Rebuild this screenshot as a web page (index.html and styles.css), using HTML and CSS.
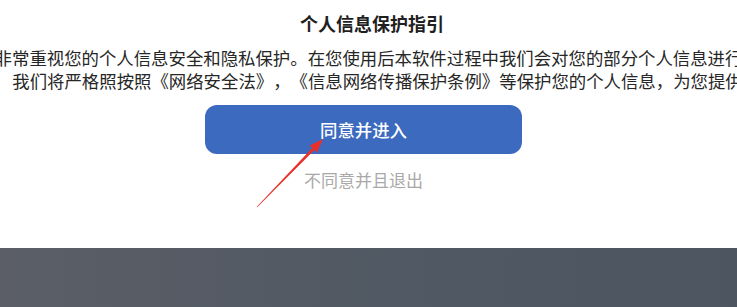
FILE: index.html
```html
<!DOCTYPE html>
<html lang="zh-CN">

<head>
    <meta charset="UTF-8">
    <meta name="viewport" content="width=device-width, initial-scale=1.0">
    <title>个人信息保护指引</title>
    <link rel="stylesheet" href="styles.css">
</head>

<body>
    <div class="dialog">
        <h1 class="title">个人信息保护指引</h1>
        <div class="content">
            <p class="line">非常重视您的个人信息安全和隐私保护。在您使用后本软件过程中我们会对您的部分个人信息进行</p>
            <p class="line line-indent">我们将严格照按照《网络安全法》，《信息网络传播保护条例》等保护您的个人信息，为您提供</p>
        </div>
        <button class="btn-agree">同意并进入</button>
        <a class="btn-exit">不同意并且退出</a>

        <!-- annotation arrow -->
        <svg class="arrow" width="80" height="85" viewBox="0 0 80 85">
            <polygon points="6.8,76.8 62.2,18.1 59.7,15.6 73,9 66.9,22.6 64.4,20.1 7.2,77.2" fill="#e8302a" />
        </svg>
    </div>
    <div class="footer"></div>
</body>

</html>
```

FILE: styles.css
```css
html,
body {
    margin: 0;
    padding: 0;
    overflow: hidden;
    background: #fff;
}

body {
    font-family: "Noto Sans CJK SC", "Noto Sans", sans-serif;
    color: #222;
    text-spacing-trim: space-all;
    /* keep full-width punctuation */
}

.dialog {
    position: relative;
    height: 248px;
    display: flex;
    flex-direction: column;
    align-items: center;
}

.title {
    margin: 11px 0 0 7px;
    font-size: 18px;
    line-height: 24px;
    font-weight: 700;
    color: #1f1f1f;
}

.content {
    margin-top: 11px;
    display: flex;
    flex-direction: column;
    align-items: center;
}

.line {
    margin: 0;
    font-size: 17.4px;
    line-height: 23px;
    white-space: nowrap;
    color: #262626;
}

.line-indent {
    padding-left: 18px;
}

.btn-agree {
    margin: 13px 10px 0 0;
    width: 317px;
    height: 49px;
    border: none;
    border-radius: 12px;
    background: #3c6abf;
    color: #fff;
    font-family: inherit;
    font-size: 17.4px;
    font-weight: 500;
    cursor: pointer;
}

.btn-exit {
    margin: 14px 10px 0 0;
    font-size: 17px;
    line-height: 24px;
    color: #a9a9a9;
    cursor: pointer;
}

.arrow {
    position: absolute;
    left: 250px;
    top: 130px;
}

.footer {
    height: 59px;
    background: linear-gradient(to right, #5b5e66, #4f5863 60%, #4d5561);
}
```
